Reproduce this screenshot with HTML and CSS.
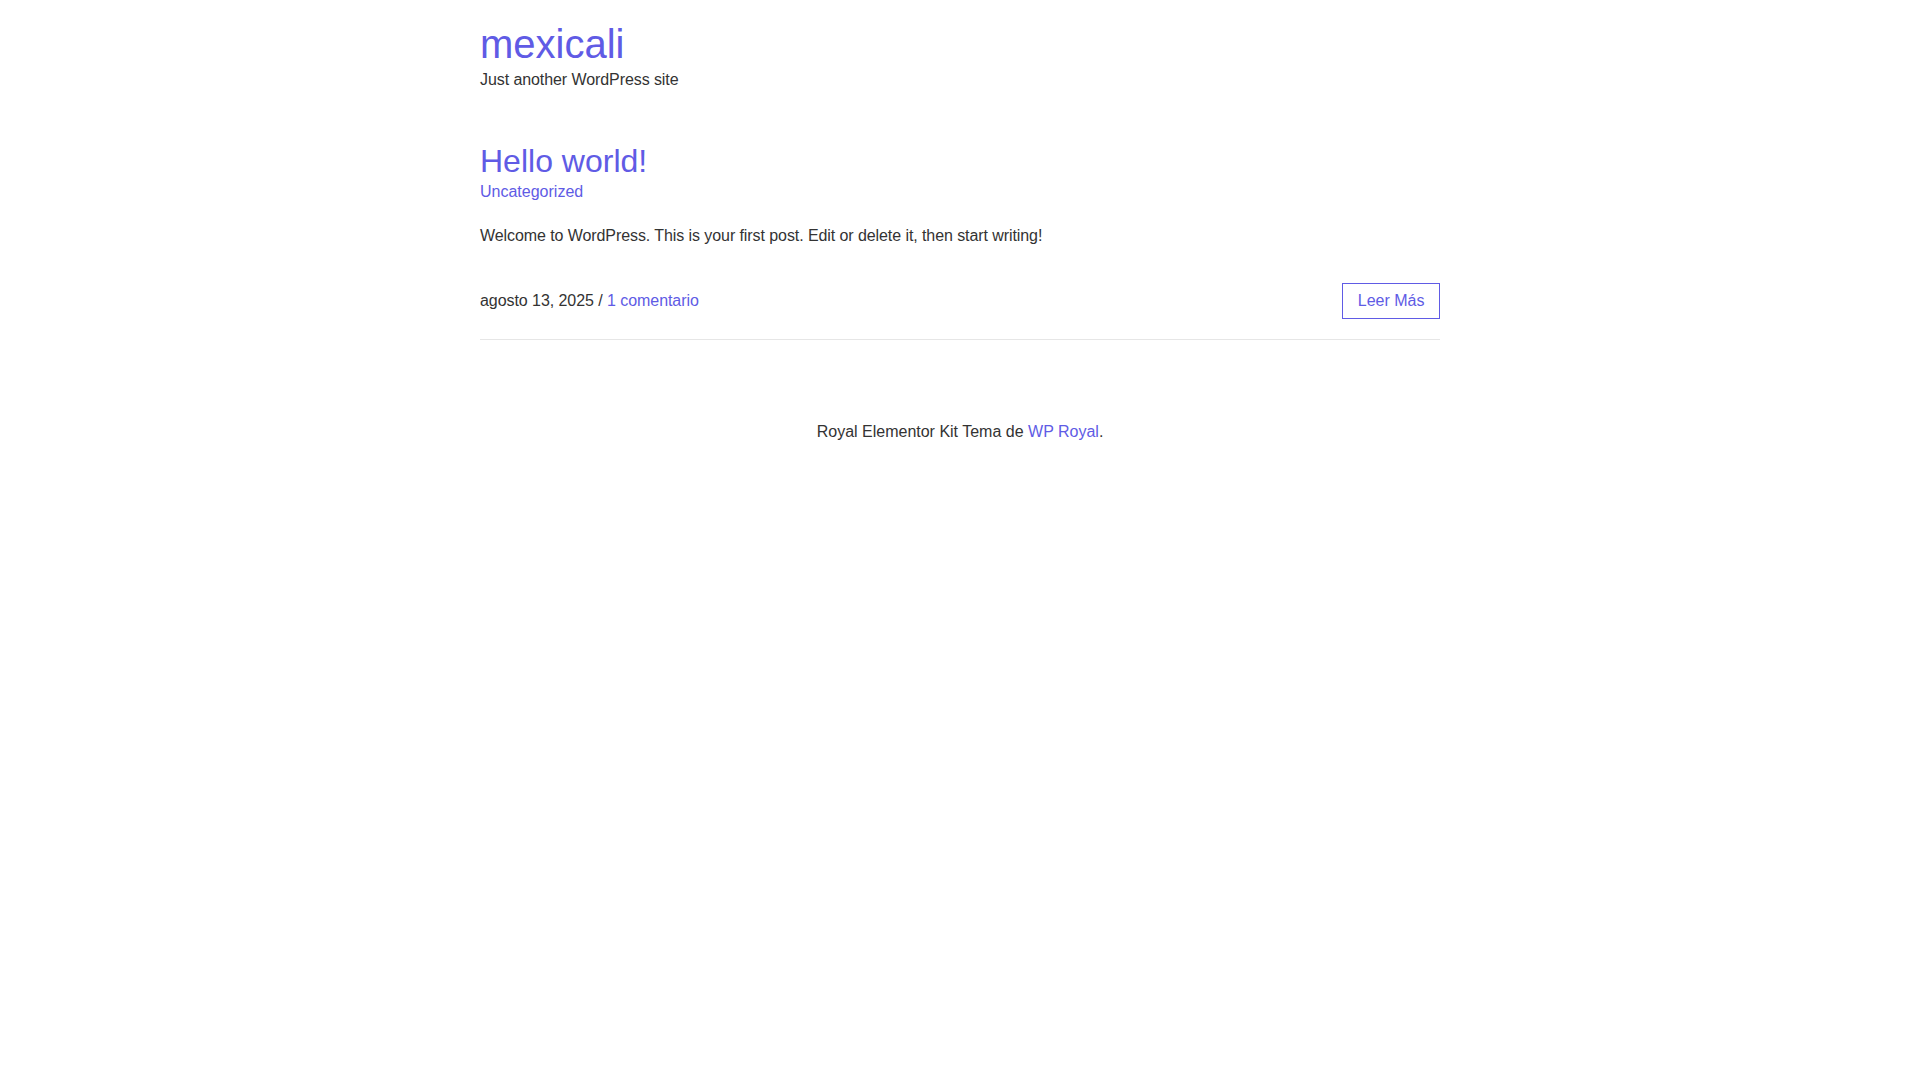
FILE: index.html
```html
<!DOCTYPE html>
<html lang="es">
<head>
<meta charset="utf-8">
<title>mexicali – Just another WordPress site</title>
<link rel="stylesheet" href="styles.css">
</head>
<body>
<div class="page">
  <header class="site-header">
    <div class="site-title"><a href="#">mexicali</a></div>
    <p class="site-description">Just another WordPress site</p>
  </header>
  <main class="site-main">
    <article class="post">
      <header class="entry-header">
        <h2 class="entry-title"><a href="#">Hello world!</a></h2>
        <div class="entry-categories"><a href="#">Uncategorized</a></div>
      </header>
      <div class="entry-summary">
        <p>Welcome to WordPress. This is your first post. Edit or delete it, then start writing!</p>
      </div>
      <footer class="entry-footer">
        <div class="entry-meta">agosto 13, 2025 / <a href="#">1 comentario</a></div>
        <a class="read-more" href="#">Leer Más</a>
      </footer>
    </article>
  </main>
  <footer class="site-footer">
    <p>Royal Elementor Kit Tema de <a href="#">WP Royal</a>.</p>
  </footer>
</div>
</body>
</html>
```
FILE: styles.css
```css
html, body {
  margin: 0;
  padding: 0;
  background: #ffffff;
}
body {
  font-family: "Liberation Sans", Arial, sans-serif;
  font-size: 16px;
  line-height: 24px;
  color: #333333;
}
a {
  color: #605be5;
  text-decoration: none;
}
p { margin: 0; }
.page {
  width: 960px;
  margin: 0 auto;
}
.site-header {
  padding-top: 20px;
}
.site-title {
  font-size: 40px;
  line-height: 48px;
}
.site-description {
  line-height: 24px;
  letter-spacing: -0.08px;
}
.site-main {
  padding-top: 50px;
}
.entry-title {
  margin: 0;
  font-size: 32px;
  line-height: 38px;
  font-weight: 400;
}
.entry-categories {
  line-height: 24px;
}
.entry-summary {
  margin-top: 20px;
  letter-spacing: -0.08px;
}
.entry-footer {
  margin-top: 35px;
  display: flex;
  justify-content: space-between;
  align-items: center;
  padding-bottom: 20px;
  border-bottom: 1px solid #e6e6e6;
}
.entry-meta {
  letter-spacing: -0.06px;
}
.read-more {
  display: inline-block;
  box-sizing: border-box;
  height: 36px;
  line-height: 34px;
  padding: 0 14.5px;
  border: 1px solid #605be5;
  font-family: "Liberation Sans", Arial, sans-serif;
  font-size: 16px;
}
.site-footer {
  text-align: center;
  padding-top: 80px;
}
```
